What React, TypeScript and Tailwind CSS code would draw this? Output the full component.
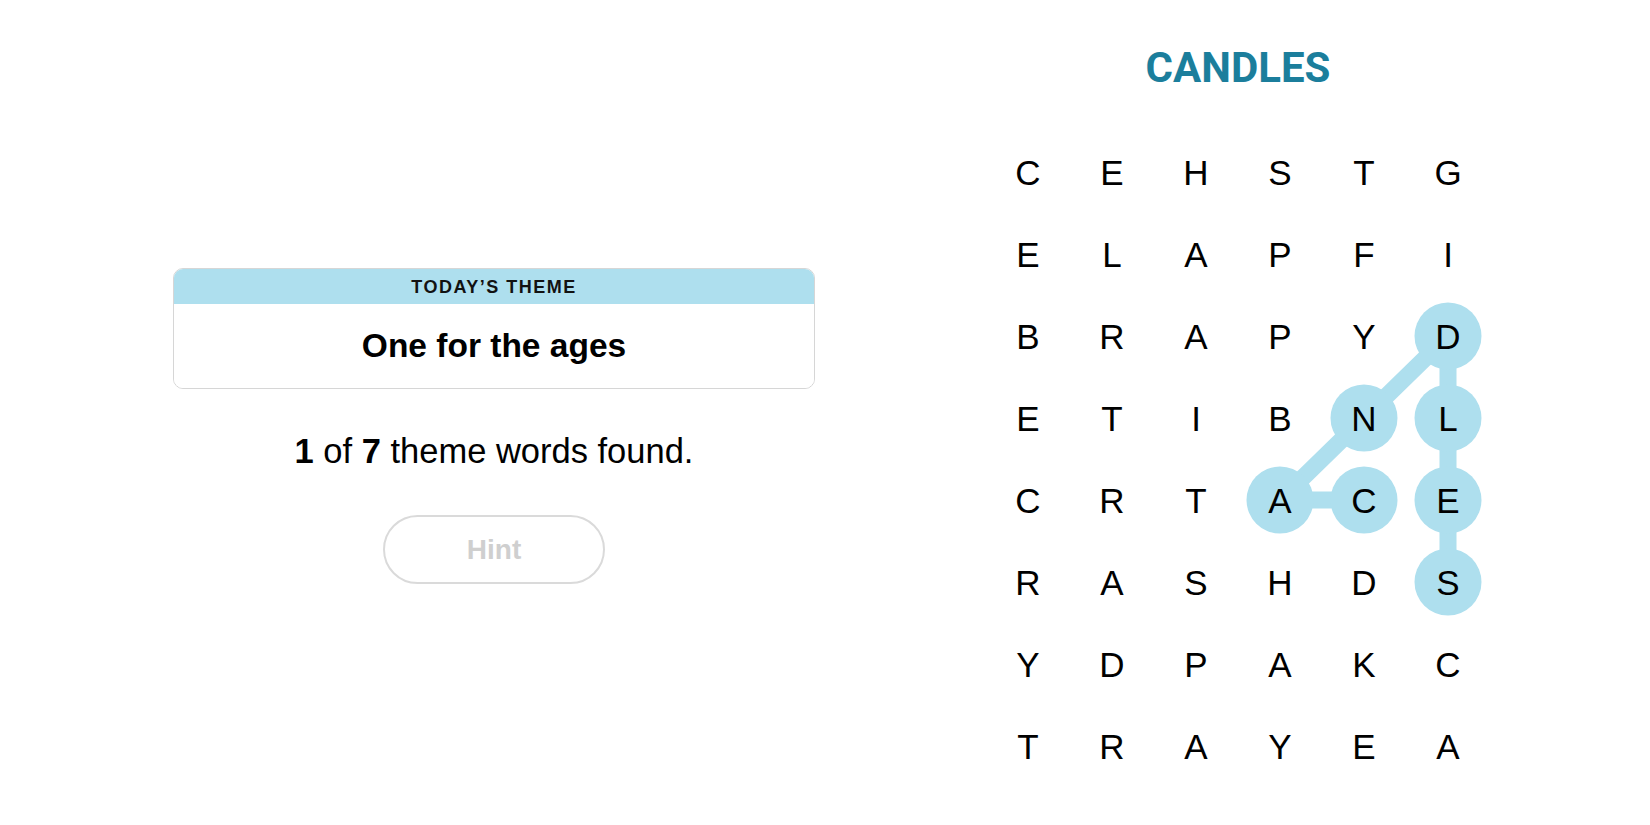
import React from "react";

const rows = ["CEHSTG", "ELAPFI", "BRAPYD", "ETIBNL", "CRTACE", "RASHDS", "YDPAKC", "TRAYEA"];

// found word path, [col, row]
const path: [number, number][] = [
  [4, 4],
  [3, 4],
  [4, 3],
  [5, 2],
  [5, 3],
  [5, 4],
  [5, 5],
];

const CW = 84;
const RH = 82;

const LetterGrid = () => {
  const pts = path.map(([c, r]) => `${c * CW + CW / 2},${r * RH + RH / 2}`).join(" ");
  return (
    <div className="relative w-[504px] h-[656px]">
      <svg className="absolute inset-0" width={504} height={656} viewBox="0 0 504 656">
        <polyline points={pts} fill="none" stroke="#aedfee" strokeWidth={17} strokeLinejoin="round" />
        {path.map(([c, r]) => (
          <circle key={`${c}-${r}`} cx={c * CW + CW / 2} cy={r * RH + RH / 2} r={33.5} fill="#aedfee" />
        ))}
      </svg>
      <div className="relative grid grid-cols-6">
        {rows.map((row, ri) =>
          row.split("").map((ch, ci) => (
            <div key={`${ri}-${ci}`} className="h-[82px] flex items-center justify-center">
              <span className="text-[35px] leading-none text-black">{ch}</span>
            </div>
          ))
        )}
      </div>
    </div>
  );
};

export default function App() {
  return (
    <div
      className="w-[1650px] h-[825px] bg-white flex overflow-hidden"
      style={{ fontFamily: '"Liberation Sans", Arial, sans-serif' }}
    >
      <div className="ml-[173px] w-[642px] pt-[268px] flex flex-col items-center">
        <div className="w-full rounded-[10px] border border-[#d6d6d6] overflow-hidden">
          <div className="h-[35px] bg-[#aedfee] flex items-center justify-center">
            <span className="text-[18px] font-bold tracking-[1.5px] text-[#121212] leading-none">
              TODAY’S THEME
            </span>
          </div>
          <div className="h-[84px] bg-white flex items-center justify-center">
            <span className="text-[33.5px] font-bold text-black leading-none">One for the ages</span>
          </div>
        </div>
        <p className="mt-[42px] text-[34.5px] leading-[40px] text-black">
          <b>1</b> of <b>7</b> theme words found.
        </p>
        <button className="mt-[44px] w-[222px] h-[69px] rounded-full border-2 border-[#dadada] bg-white text-[28px] font-bold text-[#cfcfcf]">
          Hint
        </button>
      </div>
      <div className="ml-[171px] w-[504px] flex flex-col items-center">
        <h1
          className="mt-[44px] text-[42px] leading-[48px] font-bold text-[#1b7e9c]"
          style={{ fontFamily: "Roboto, 'Liberation Sans', sans-serif" }}
        >
          CANDLES
        </h1>
        <div className="mt-[39px]">
          <LetterGrid />
        </div>
      </div>
    </div>
  );
}
